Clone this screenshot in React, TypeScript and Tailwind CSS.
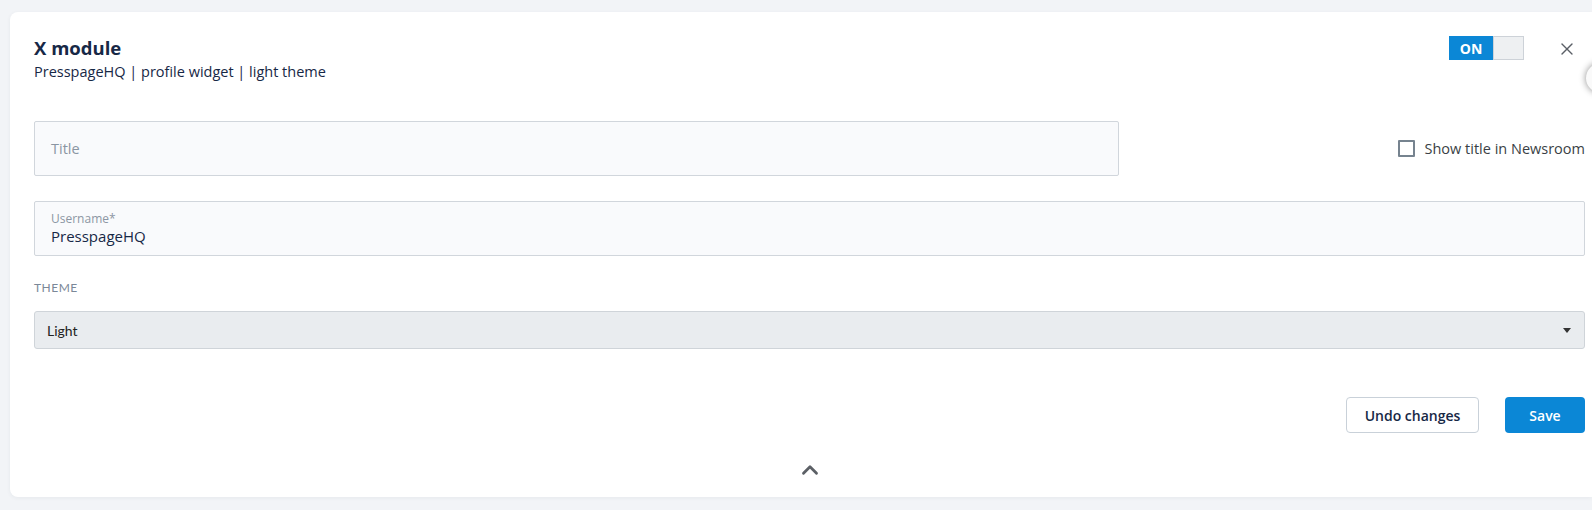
import { X, ChevronUp } from "lucide-react";

const ModuleCard = () => {
  return (
    <div className="relative min-h-[510px] w-full overflow-hidden bg-[#f2f4f7] pt-[12px] pl-[10px] font-['Open_Sans',sans-serif]">
      {/* Card */}
      <div className="rounded-l-[8px] bg-white pt-[24px] pl-[24px] pr-[7px] pb-[14px] shadow-[0_1px_4px_rgba(30,45,70,0.06)]">
        {/* Header */}
        <div className="flex items-start justify-between">
          <div>
            <h2 className="text-[18.5px] font-bold leading-[24px] text-[#172846]">X module</h2>
            <p className="mt-[2px] text-[14.5px] leading-[20px] text-[#172846]">
              PresspageHQ | profile widget | light theme
            </p>
          </div>
          <div className="flex items-start gap-[33px] pr-[8px]">
            <div className="flex h-[24px] w-[75px]">
              <div className="flex w-[44px] items-center justify-center bg-[#0b87d6] text-[14px] font-bold text-white">
                ON
              </div>
              <div className="flex-1 border border-[#cdd2d8] bg-[#eef0f2]"></div>
            </div>
            <X className="mt-[3px] h-[20px] w-[20px] text-[#5a5f66]" strokeWidth={1.6} />
          </div>
        </div>

        {/* Title row */}
        <div className="mt-[39px] flex items-center">
          <div className="flex h-[55px] w-[1085px] items-center rounded-[2px] border border-[#d1d6dc] bg-[#f9fafc] px-[16px] text-[14.5px] text-[#8a95a2]">
            Title
          </div>
          <label className="ml-auto flex items-center gap-[10px] text-[14.5px] text-[#3a3f45]">
            <span className="h-[17px] w-[17px] rounded-[1px] border-2 border-[#76838f]"></span>
            Show title in Newsroom
          </label>
        </div>

        {/* Username */}
        <div className="mt-[25px] flex h-[55px] flex-col justify-center rounded-[2px] border border-[#d1d6dc] bg-[#f9fafc] px-[16px]">
          <span className="text-[12px] leading-[15px] text-[#8c96a3]">Username*</span>
          <span className="text-[15px] leading-[20px] text-[#172846]">PresspageHQ</span>
        </div>

        {/* Theme */}
        <div className="mt-[24px] font-['Lato',sans-serif] text-[12px] leading-[16px] tracking-[0.5px] text-[#7b8898]">
          THEME
        </div>
        <div className="mt-[15px] flex h-[38px] items-center justify-between rounded-[3px] border border-[#cfd4d9] bg-[#e9ecef] pl-[12px] pr-[12px] font-['Lato',sans-serif] text-[14px] text-[#222]">
          <span>Light</span>
          <svg width="8" height="5" viewBox="0 0 8 5" className="mr-[1px]">
            <path d="M0 0h8L4 5z" fill="#333" />
          </svg>
        </div>

        {/* Actions */}
        <div className="mt-[48px] flex justify-end gap-[26px]">
          <button className="h-[36px] w-[133px] rounded-[4px] border border-[#c9d1d9] bg-white text-[14px] font-semibold text-[#172846]">
            Undo changes
          </button>
          <button className="h-[36px] w-[80px] rounded-[4px] bg-[#0b87d6] text-[14px] font-semibold text-white">
            Save
          </button>
        </div>

        <div className="mt-[24px] flex justify-center">
          <ChevronUp className="h-[26px] w-[26px] text-[#5c6066]" strokeWidth={2.6} />
        </div>
      </div>

      {/* partly visible floating button on the right edge */}
      <div className="absolute left-[1586px] top-[63px] h-[30px] w-[30px] rounded-full bg-[#fafafa] shadow-[0_0_7px_rgba(0,0,0,0.45)]"></div>
    </div>
  );
};

export default function App() {
  return <ModuleCard />;
}
